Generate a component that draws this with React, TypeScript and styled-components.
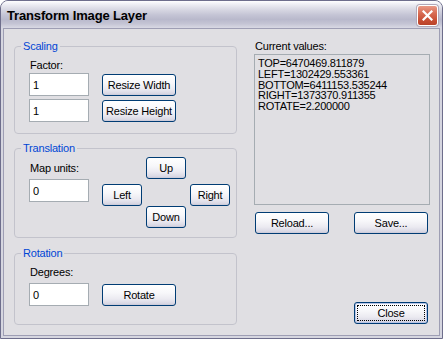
import { FC } from 'react';
import { createGlobalStyle, styled } from 'styled-components';

const GlobalStyle = createGlobalStyle`
  html, body {
    margin: 0;
    padding: 0;
    background: #ffffff;
  }
  * {
    box-sizing: border-box;
  }
`;

const UI_FONT = `"Liberation Sans", Arial, sans-serif`;

const values = [
  'TOP=6470469.811879',
  'LEFT=1302429.553361',
  'BOTTOM=6411153.535244',
  'RIGHT=1373370.911355',
  'ROTATE=2.200000',
];

const CloseIcon: FC = () => (
  <svg width="11" height="11" viewBox="0 0 11 11">
    <path d="M1.5 1.5 L9.5 9.5 M9.5 1.5 L1.5 9.5" stroke="#ffffff" strokeWidth="2.2" strokeLinecap="square" />
  </svg>
);

const App: FC = () => {
  return (
    <>
      <GlobalStyle />
      <S.Window>
        <S.TitleBar>
          <S.Title>Transform Image Layer</S.Title>
          <S.CloseBox aria-label="close">
            <CloseIcon />
          </S.CloseBox>
        </S.TitleBar>
        <S.Frame>
          <S.Client>
            <S.LeftColumn>
              <S.Group $padTop={6} $padBottom={11}>
                <S.Legend>Scaling</S.Legend>
                <S.Label $gap={1}>Factor:</S.Label>
                <S.FieldGrid>
                  <S.TextBox defaultValue="1" />
                  <S.Button>Resize Width</S.Button>
                  <S.TextBox defaultValue="1" />
                  <S.Button>Resize Height</S.Button>
                </S.FieldGrid>
              </S.Group>

              <S.Group $padTop={2} $padBottom={9} $marginTop={8}>
                <S.Legend>Translation</S.Legend>
                <S.TranslateRow>
                  <S.Stack>
                    <S.Label $gap={4}>Map units:</S.Label>
                    <S.TextBox defaultValue="0" />
                  </S.Stack>
                  <S.Cross>
                    <S.Button $w={40} style={{ gridArea: 'up' }}>Up</S.Button>
                    <S.Button $w={40} style={{ gridArea: 'left' }}>Left</S.Button>
                    <S.Button $w={40} style={{ gridArea: 'right' }}>Right</S.Button>
                    <S.Button $w={40} style={{ gridArea: 'down' }}>Down</S.Button>
                  </S.Cross>
                </S.TranslateRow>
              </S.Group>

              <S.Group $padTop={6} $padBottom={18} $marginTop={9}>
                <S.Legend>Rotation</S.Legend>
                <S.Label $gap={4}>Degrees:</S.Label>
                <S.FieldGrid>
                  <S.TextBox defaultValue="0" />
                  <S.Button>Rotate</S.Button>
                </S.FieldGrid>
              </S.Group>
            </S.LeftColumn>

            <S.RightColumn>
              <S.Label $gap={1}>Current values:</S.Label>
              <S.Values readOnly defaultValue={values.join('\n')} />
              <S.ButtonRow>
                <S.Button>Reload...</S.Button>
                <S.Button>Save...</S.Button>
              </S.ButtonRow>
              <S.Footer>
                <S.Button $isDefault>
                  <S.Focus>Close</S.Focus>
                </S.Button>
              </S.Footer>
            </S.RightColumn>
          </S.Client>
        </S.Frame>
      </S.Window>
    </>
  );
};

const S = {
  Window: styled.div`
    width: 443px;
    height: 339px;
    display: flex;
    flex-direction: column;
    border: 1px solid #6e6e8c;
    border-radius: 8px 8px 0 0;
    overflow: hidden;
    background: #d6d6e0;
    font-family: ${UI_FONT};
  `,

  TitleBar: styled.div`
    height: 27px;
    flex: none;
    display: flex;
    align-items: center;
    justify-content: space-between;
    padding: 0 4px 0 6px;
    background: linear-gradient(
      180deg,
      #ffffff 0%,
      #f1f1f6 10%,
      #dcdce6 28%,
      #c6c6d6 50%,
      #b9b9cc 68%,
      #c4c4d4 84%,
      #d9d9e4 100%
    );
  `,

  Title: styled.span`
    font-family: ${UI_FONT};
    font-size: 13px;
    font-weight: 700;
    letter-spacing: -0.15px;
    color: #000000;
    padding-top: 1px;
  `,

  CloseBox: styled.div`
    width: 21px;
    height: 21px;
    display: flex;
    align-items: center;
    justify-content: center;
    margin-top: 2px;
    border: 1px solid #ffffff;
    border-radius: 3px;
    background: linear-gradient(180deg, #e99a86 0%, #d76a52 40%, #c54b31 80%, #b9432b 100%);
    box-shadow: 0 0 0 1px #b0a8b8;
  `,

  Frame: styled.div`
    flex: 1;
    display: flex;
    padding: 0 2px 2px;
    background: #d6d6e0;
  `,

  Client: styled.div`
    flex: 1;
    display: flex;
    gap: 17px;
    padding: 11px 9px 10px 10px;
    background: #e0dfe3;
    border: 1px solid #9e9eb4;
  `,

  LeftColumn: styled.div`
    width: 223px;
    display: flex;
    flex-direction: column;
  `,

  RightColumn: styled.div`
    flex: 1;
    display: flex;
    flex-direction: column;
  `,

  Group: styled.fieldset<{ $padTop: number; $padBottom: number; $marginTop?: number }>`
    margin: ${p => p.$marginTop ?? 0}px 0 0;
    padding: ${p => p.$padTop}px 14px ${p => p.$padBottom}px;
    border: 1px solid #c3c3cc;
    border-radius: 4px;
    min-inline-size: 0;
  `,

  Legend: styled.legend`
    margin-left: -8px;
    padding: 0 2px;
    font-size: 11px;
    line-height: 13px;
    letter-spacing: -0.2px;
    color: #0046d5;
  `,

  Label: styled.div<{ $gap: number }>`
    margin: 0 0 ${p => p.$gap}px 1px;
    font-size: 11px;
    line-height: 13px;
    letter-spacing: -0.2px;
    color: #000000;
    white-space: nowrap;
  `,

  FieldGrid: styled.div`
    display: grid;
    grid-template-columns: 60px 74px;
    column-gap: 13px;
    row-gap: 3px;
    align-items: center;
  `,

  TranslateRow: styled.div`
    display: flex;
    gap: 13px;
  `,

  Stack: styled.div`
    width: 60px;
    display: flex;
    flex-direction: column;
    padding-top: 5px;
  `,

  Cross: styled.div`
    display: grid;
    grid-template-columns: 40px 40px 40px;
    grid-template-rows: 27px 22px 22px;
    grid-template-areas:
      '. up .'
      'left . right'
      '. down .';
    column-gap: 4px;
    align-items: start;
  `,

  TextBox: styled.input`
    width: 60px;
    height: 23px;
    margin: 0;
    padding: 0 3px;
    border: 1px solid #a5acb2;
    background: #ffffff;
    font-family: ${UI_FONT};
    font-size: 11px;
    color: #000000;
    outline: none;
  `,

  Button: styled.button<{ $w?: number; $isDefault?: boolean }>`
    width: ${p => p.$w ?? 74}px;
    height: 22px;
    margin: 0;
    padding: ${p => (p.$isDefault ? '2px' : '0')};
    display: flex;
    align-items: stretch;
    justify-content: center;
    border: 1px solid #003c74;
    border-radius: 3px;
    background: linear-gradient(
      180deg,
      #ffffff 0%,
      #f7f7fa 40%,
      #ebeaf1 70%,
      #d9d8e4 92%,
      #c8c7d6 100%
    );
    box-shadow: ${p => (p.$isDefault ? 'inset 0 0 0 1px #b8c4e6' : 'none')};
    font-family: ${UI_FONT};
    font-size: 11px;
    letter-spacing: -0.2px;
    color: #000000;
    line-height: 20px;
    white-space: nowrap;
    cursor: default;
  `,

  Focus: styled.span`
    flex: 1;
    display: flex;
    align-items: center;
    justify-content: center;
    border: 1px dotted #000000;
    line-height: 14px;
  `,

  Values: styled.textarea`
    height: 151px;
    margin: 0;
    padding: 3px 3px;
    border: 1px solid #a5acb2;
    background: #e0dfe3;
    font-family: ${UI_FONT};
    font-size: 11px;
    line-height: 10.8px;
    letter-spacing: -0.25px;
    color: #000000;
    resize: none;
    overflow: hidden;
    outline: none;
  `,

  ButtonRow: styled.div`
    display: flex;
    justify-content: space-between;
    margin-top: 7px;
    padding: 0 2px 0 1px;
  `,

  Footer: styled.div`
    margin-top: auto;
    display: flex;
    justify-content: flex-end;
    padding-right: 2px;
    padding-bottom: 1px;
  `,
};

export default App;
